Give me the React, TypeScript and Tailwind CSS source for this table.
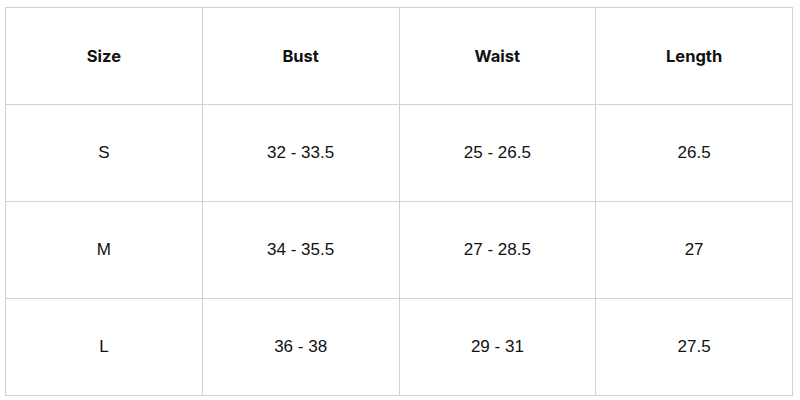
const HEAD = ['Size', 'Bust', 'Waist', 'Length'];

const ROWS = [
  ['S', '32 - 33.5', '25 - 26.5', '26.5'],
  ['M', '34 - 35.5', '27 - 28.5', '27'],
  ['L', '36 - 38', '29 - 31', '27.5'],
];

export default function App() {
  return (
    <div className="w-[800px] h-[400px] bg-white pl-[5px] pt-[7px] text-[#111]">
      <table className="w-[788px] h-[388px] border-collapse table-fixed">
        <thead>
          <tr className="h-[97px]">
            {HEAD.map((h) => (
              <th
                key={h}
                className="border-[1.5px] border-[#d2d2d2] font-['Inter',sans-serif] text-[16.5px] font-bold text-center"
              >
                {h}
              </th>
            ))}
          </tr>
        </thead>
        <tbody>
          {ROWS.map((row) => (
            <tr key={row[0]} className="h-[97px]">
              {row.map((cell, i) => (
                <td
                  key={i}
                  className="border-[1.5px] border-[#d2d2d2] font-['Liberation_Sans',Arial,sans-serif] text-[17px] text-center"
                >
                  {cell}
                </td>
              ))}
            </tr>
          ))}
        </tbody>
      </table>
    </div>
  );
}
